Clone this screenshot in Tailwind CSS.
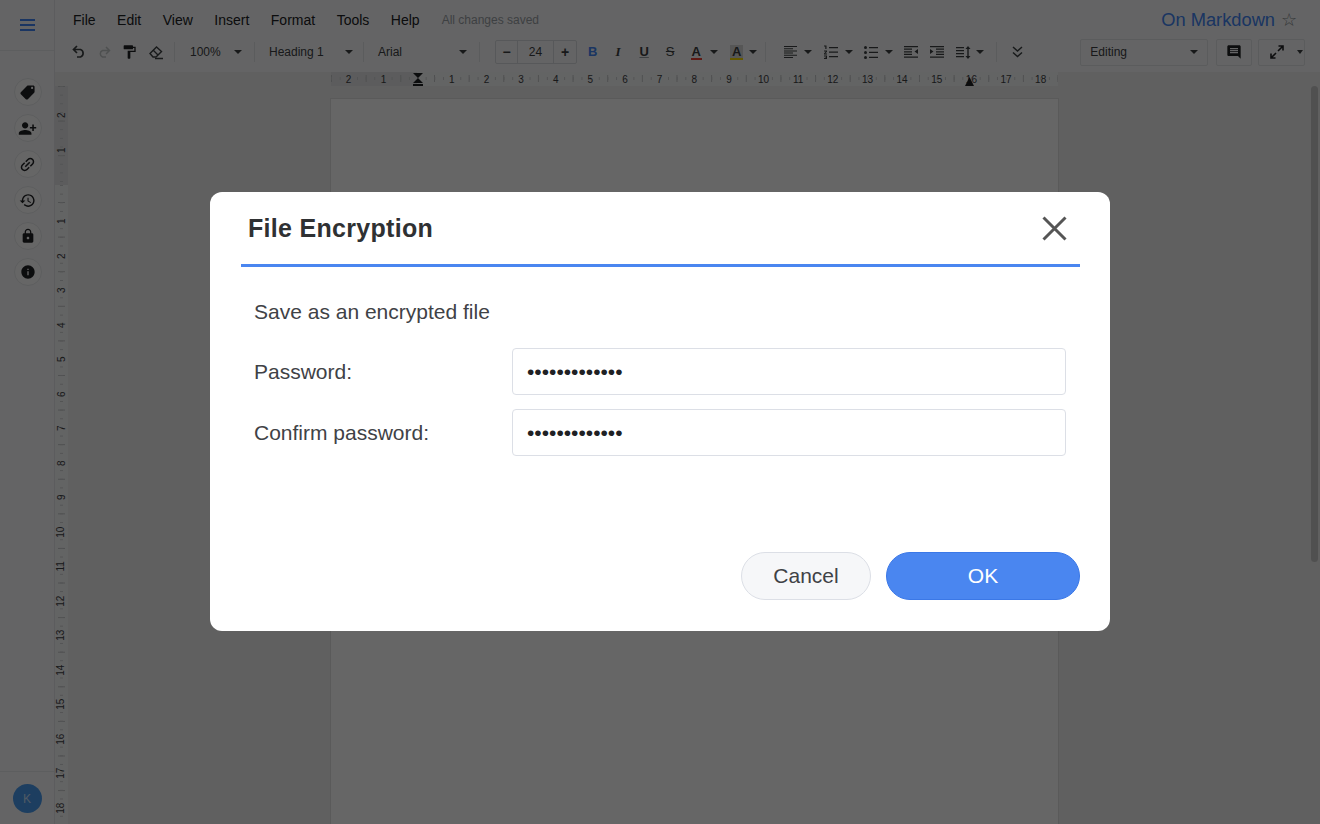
<!DOCTYPE html>
<html><head><meta charset="utf-8"><title>On Markdown</title>
<script src="https://cdn.jsdelivr.net/npm/@tailwindcss/browser@4"></script></head>
<body class="m-0 overflow-hidden font-['Liberation_Sans',Arial,sans-serif]">
<div class="relative w-[1320px] h-[824px] overflow-hidden bg-[#f0f0f0] flex text-[#3c4043]">
  <!-- left rail -->
  <aside class="w-[55px] shrink-0 bg-[#fafbfc] border-r border-[#e5e7ea] flex flex-col items-center">
    <div class="h-[51px] w-full flex items-center justify-center border-b border-[#e8eaed] pl-[2px]">
      <svg width="16" height="12" viewBox="0 0 16 12" fill="#4285f4"><rect width="15" height="2" y="0"/><rect width="15" height="2" y="5"/><rect width="15" height="2" y="10"/></svg>
    </div>
    <div class="flex flex-col gap-2 mt-[27px] ml-[1px]">
      <div class="w-7 h-7 rounded-full bg-white border border-[#e8eaed] flex items-center justify-center"><svg width="17" height="17" viewBox="0 0 24 24" fill="#202124" class="rotate-90"><path d="M21.41 11.58l-9-9C12.05 2.22 11.55 2 11 2H4c-1.1 0-2 .9-2 2v7c0 .55.22 1.05.59 1.42l9 9c.36.36.86.58 1.41.58.55 0 1.05-.22 1.41-.59l7-7c.37-.36.59-.86.59-1.41 0-.55-.23-1.06-.59-1.42zM5.5 7C4.67 7 4 6.33 4 5.5S4.67 4 5.5 4 7 4.67 7 5.5 6.33 7 5.5 7z"/></svg></div>
      <div class="w-7 h-7 rounded-full bg-white border border-[#e8eaed] flex items-center justify-center"><svg width="19" height="19" viewBox="0 0 24 24" fill="#202124" class="-scale-x-100"><path d="M15 12c2.21 0 4-1.79 4-4s-1.79-4-4-4-4 1.79-4 4 1.79 4 4 4zm-9-2V7H4v3H1v2h3v3h2v-3h3v-2H6zm9 4c-2.67 0-8 1.34-8 4v2h16v-2c0-2.66-5.33-4-8-4z"/></svg></div>
      <div class="w-7 h-7 rounded-full bg-white border border-[#e8eaed] flex items-center justify-center"><svg width="19" height="19" viewBox="0 0 24 24" fill="#202124" class="-rotate-45"><path d="M3.9 12c0-1.71 1.39-3.1 3.1-3.1h4V7H7c-2.76 0-5 2.24-5 5s2.24 5 5 5h4v-1.9H7c-1.71 0-3.1-1.39-3.1-3.1zM8 13h8v-2H8v2zm9-6h-4v1.9h4c1.71 0 3.1 1.39 3.1 3.1s-1.39 3.1-3.1 3.1h-4V17h4c2.76 0 5-2.24 5-5s-2.24-5-5-5z"/></svg></div>
      <div class="w-7 h-7 rounded-full bg-white border border-[#e8eaed] flex items-center justify-center"><svg width="17" height="17" viewBox="0 0 24 24" fill="#202124"><path d="M13 3c-4.97 0-9 4.03-9 9H1l3.89 3.89.07.14L9 12H6c0-3.87 3.13-7 7-7s7 3.13 7 7-3.13 7-7 7c-1.93 0-3.68-.79-4.94-2.06l-1.42 1.42C8.27 19.99 10.51 21 13 21c4.97 0 9-4.03 9-9s-4.03-9-9-9zm-1 5v5l4.28 2.54.72-1.21-3.5-2.08V8H12z"/></svg></div>
      <div class="w-7 h-7 rounded-full bg-white border border-[#e8eaed] flex items-center justify-center"><svg width="16" height="16" viewBox="0 0 24 24" fill="#202124"><path d="M18 8h-1V6c0-2.76-2.24-5-5-5S7 3.24 7 6v2H6c-1.1 0-2 .9-2 2v10c0 1.1.9 2 2 2h12c1.1 0 2-.9 2-2V10c0-1.1-.9-2-2-2zm-6 9c-1.1 0-2-.9-2-2s.9-2 2-2 2 .9 2 2-.9 2-2 2zm3.1-9H8.9V6c0-1.71 1.39-3.1 3.1-3.1 1.71 0 3.1 1.39 3.1 3.1v2z"/></svg></div>
      <div class="w-7 h-7 rounded-full bg-white border border-[#e8eaed] flex items-center justify-center"><svg width="16" height="16" viewBox="0 0 24 24" fill="#202124"><path d="M12 2C6.48 2 2 6.48 2 12s4.48 10 10 10 10-4.48 10-10S17.52 2 12 2zm1 15h-2v-6h2v6zm0-8h-2V7h2v2z"/></svg></div>
    </div>
    <div class="mt-auto w-full border-t border-[#e8eaed] pt-[12px] pb-[11px] flex justify-center">
      <div class="w-[29px] h-[29px] rounded-full bg-[#4a9bf0] text-white/70 text-xs flex items-center justify-center">K</div>
    </div>
  </aside>
  <!-- main -->
  <div class="flex-1 min-w-0 flex flex-col">
    <header class="h-[72px] bg-[#fafbfc] shrink-0 flex flex-col">
      <div class="h-9 pt-[4px] flex items-center pl-[18px] pr-[23px] text-sm text-[#202124]">
        <nav class="flex gap-[21.5px]"><span>File</span><span>Edit</span><span>View</span><span>Insert</span><span>Format</span><span>Tools</span><span>Help</span></nav>
        <span class="ml-[22px] text-xs text-[#9aa0a6]">All changes saved</span>
        <span class="ml-auto text-[18.3px] text-[#4285f4]">On Markdown</span>
        <span class="ml-[6px] text-lg leading-none text-[#80868b]">☆</span>
      </div>
      <div class="h-8 flex items-center pl-[16px] text-xs text-[#3c4043]">
        <svg width="16" height="16" viewBox="0 0 16 16" fill="none" stroke="#3c4043" stroke-width="1.7"><path d="M6 2 2.5 5.5 6 9M3 5.5h6.5a4 4 0 0 1 0 7.5H6"/></svg>
        <svg class="ml-[9px]" width="16" height="16" viewBox="0 0 16 16" fill="none" stroke="#c4c7c9" stroke-width="1.5"><path d="M10 3l3.500 3.500L10 10M13 6.500H6.500a3.500 3.500 0 0 0 0 6.500H10"/></svg>
        <svg class="ml-[9px]" width="16" height="16" viewBox="0 0 24 24" fill="#202124"><path d="M18 4V3c0-.55-.45-1-1-1H5c-.55 0-1 .45-1 1v4c0 .55.45 1 1 1h12c.55 0 1-.45 1-1V6h2v4H10v11c0 .55.45 1 1 1h2c.55 0 1-.45 1-1v-9h8V4h-4z"/></svg>
        <svg class="ml-[11px]" width="16" height="16" viewBox="0 0 16 16" fill="none" stroke="#3c4043" stroke-width="1.4"><path d="M2 9.500 8.500 3l5 4.500L8 13H5z"/><path d="M5 6l5 5M7 14.500h8" /></svg>
        <i class="w-px h-5 bg-[#e3e5e8] ml-[10px]"></i>
        <span class="ml-[15px] w-[30px]">100%</span>
        <i class="ml-[14px] w-0 h-0 border-x-[4px] border-x-transparent border-t-[4px] border-t-[#3c4043]"></i>
        <i class="w-px h-5 bg-[#e3e5e8] ml-[12px]"></i>
        <span class="ml-[14px] w-[55px]">Heading 1</span>
        <i class="ml-[21px] w-0 h-0 border-x-[4px] border-x-transparent border-t-[4px] border-t-[#3c4043]"></i>
        <i class="w-px h-5 bg-[#e3e5e8] ml-[10px]"></i>
        <span class="ml-[14px] w-[25px]">Arial</span>
        <i class="ml-[56px] w-0 h-0 border-x-[4px] border-x-transparent border-t-[4px] border-t-[#3c4043]"></i>
        <i class="w-px h-5 bg-[#e3e5e8] ml-[12px]"></i>
        <div class="ml-[15px] w-[82px] h-[24px] border border-[#dadce0] rounded-[2px] flex items-center">
          <span class="w-[22px] h-full flex items-center justify-center border-r border-[#dadce0] text-sm font-bold">−</span>
          <span class="flex-1 text-center">24</span>
          <span class="w-[23px] h-full flex items-center justify-center border-l border-[#dadce0] text-sm font-bold">+</span>
        </div>
        <span class="ml-[11px] text-[13px] font-bold text-[#4285f4]">B</span>
        <span class="ml-[18px] text-[13px] italic font-bold font-['Liberation_Serif',serif]">I</span>
        <span class="ml-[19px] text-[13px] font-bold underline decoration-[#9aa0a6]">U</span>
        <span class="ml-[17px] text-[13px] line-through">S</span>
        <span class="ml-[16px] text-[13px] font-bold border-b-2 border-[#ea4335] leading-[13px] px-[1px]">A</span>
        <i class="ml-[8px] w-0 h-0 border-x-[4px] border-x-transparent border-t-[4px] border-t-[#3c4043]"></i>
        <span class="ml-[12px] text-[13px] font-bold border-b-2 border-[#fbdc04] bg-[#d8d8d8] leading-[13px] px-[2px]">A</span>
        <i class="ml-[6px] w-0 h-0 border-x-[4px] border-x-transparent border-t-[4px] border-t-[#3c4043]"></i>
        <i class="w-px h-5 bg-[#e3e5e8] ml-[8px]"></i>
        <svg class="ml-[18px]" width="14" height="12" viewBox="0 0 14 12" fill="#3c4043"><path d="M0 0h13v1H0zM0 2.200h9v1H0zM0 4.400h13v1H0zM0 6.600h9v1H0zM0 8.800h13v1H0zM0 11h9v1H0z"/></svg>
        <i class="ml-[6px] w-0 h-0 border-x-[4px] border-x-transparent border-t-[4px] border-t-[#3c4043]"></i>
        <svg class="ml-[12px]" width="14" height="14" viewBox="0 0 14 14" fill="#3c4043"><path d="M5 2h9v1.300H5zM5 6.500h9v1.300H5zM5 11h9v1.300H5zM0 .5h2.500v3.500H1.300V1.500H0zM0 5.500h3v1.200L1.200 8.500H3v1H0v-1l1.800-2H0zM0 10.500h3v3.500H0v-1h2v-.5H.8v-.6H2v-.4H0z"/></svg>
        <i class="ml-[7px] w-0 h-0 border-x-[4px] border-x-transparent border-t-[4px] border-t-[#3c4043]"></i>
        <svg class="ml-[11px]" width="14" height="13" viewBox="0 0 14 13" fill="#3c4043"><circle cx="1.500" cy="1.500" r="1.500"/><circle cx="1.500" cy="6.500" r="1.500"/><circle cx="1.500" cy="11.500" r="1.500"/><path d="M5 1h9v1.300H5zM5 5.800h9v1.300H5zM5 10.800h9v1.300H5z"/></svg>
        <i class="ml-[7px] w-0 h-0 border-x-[4px] border-x-transparent border-t-[4px] border-t-[#3c4043]"></i>
        <svg class="ml-[11px]" width="14" height="12" viewBox="0 0 14 12" fill="#3c4043"><path d="M0 0h14v1.200H0zM0 2.600h8v1.200H0zM0 5.200h8v1.200H0zM0 7.800h8v1.200H0zM0 10.500h14v1.200H0zM14 3v5l-3.500-2.500z"/></svg>
        <svg class="ml-[12px]" width="14" height="12" viewBox="0 0 14 12" fill="#3c4043"><path d="M0 0h14v1.200H0zM6 2.600h8v1.200H6zM6 5.200h8v1.200H6zM6 7.800h8v1.200H6zM0 10.500h14v1.200H0zM0 3v5l3.500-2.500z"/></svg>
        <svg class="ml-[12px]" width="15" height="13" viewBox="0 0 15 13" fill="#3c4043"><path d="M0 1h8v1.200H0zM0 4h8v1.200H0zM0 7h8v1.200H0zM0 10h8v1.200H0zM12 0l2.500 3h-1.800v7h1.800L12 13l-2.500-3h1.800V3H9.500z"/></svg>
        <i class="ml-[5px] w-0 h-0 border-x-[4px] border-x-transparent border-t-[4px] border-t-[#3c4043]"></i>
        <i class="w-px h-5 bg-[#e3e5e8] ml-[12px]"></i>
        <svg class="ml-[15px]" width="11" height="12" viewBox="0 0 11 12" fill="none" stroke="#3c4043" stroke-width="1.500"><path d="M1 1l4.500 4L10 1M1 6.500l4.500 4 4.500-4"/></svg>
        <div class="ml-[57px] w-[128px] h-[27px] border border-[#e3e5e8] rounded-[2px] flex items-center justify-between px-[9px]"><span class="text-xs">Editing</span><i class="w-0 h-0 border-x-[4px] border-x-transparent border-t-[4px] border-t-[#3c4043]"></i></div>
        <div class="ml-[8px] w-[36px] h-[27px] border border-[#e3e5e8] rounded-[2px] flex items-center justify-center"><svg width="16" height="16" viewBox="0 0 24 24" fill="#202124"><path d="M21.990 4c0-1.100-.890-2-1.990-2H4c-1.100 0-2 .900-2 2v12c0 1.100.900 2 2 2h14l4 4-.010-18zM18 14H6v-2h12v2zm0-3H6V9h12v2zm0-3H6V6h12v2z"/></svg></div>
        <div class="ml-[6px] w-[47px] h-[27px] border border-[#e3e5e8] rounded-[2px] flex items-center pl-[11px] gap-[13px]"><svg width="14" height="14" viewBox="0 0 14 14" fill="none" stroke="#202124" stroke-width="1.600"><path d="M8 6l4.500-4.500M8.500 1h4.500v4.500M6 8l-4.500 4.500M1 8.500V13h4.500"/></svg><i class="w-0 h-0 border-x-[3.500px] border-x-transparent border-t-[4px] border-t-[#3c4043]"></i></div>
      </div>
    </header>
    <!-- horizontal ruler -->
    <div class="h-[14px] shrink-0 flex text-[10px] leading-[15px] text-[#3c4043] bg-[#f0f0f0] relative">
      <div class="ml-[276px] w-[87px] flex bg-[#e6e7e8] bg-[linear-gradient(90deg,#cfd1d3_1px,transparent_1px),linear-gradient(90deg,#c6c8ca_1px,transparent_1px)] bg-[length:8.66px_3px,34.65px_7px] bg-[position:0_5px,0_3px] bg-repeat-x"><span class="w-[35px] text-center">2</span><span class="w-[35px] text-center">1</span></div>
      <div class="flex flex-1 mr-[262px] pl-[17px] bg-[#f8f9fa] bg-[linear-gradient(90deg,#cfd1d3_1px,transparent_1px),linear-gradient(90deg,#c6c8ca_1px,transparent_1px)] bg-[length:8.66px_3px,34.65px_7px] bg-[position:0_5px,17px_3px] bg-repeat-x">
        <span class="w-[34.65px] text-center shrink-0">1</span><span class="w-[34.65px] text-center shrink-0">2</span><span class="w-[34.65px] text-center shrink-0">3</span><span class="w-[34.65px] text-center shrink-0">4</span><span class="w-[34.65px] text-center shrink-0">5</span><span class="w-[34.65px] text-center shrink-0">6</span><span class="w-[34.65px] text-center shrink-0">7</span><span class="w-[34.65px] text-center shrink-0">8</span><span class="w-[34.65px] text-center shrink-0">9</span><span class="w-[34.65px] text-center shrink-0">10</span><span class="w-[34.65px] text-center shrink-0">11</span><span class="w-[34.65px] text-center shrink-0">12</span><span class="w-[34.65px] text-center shrink-0">13</span><span class="w-[34.65px] text-center shrink-0">14</span><span class="w-[34.65px] text-center shrink-0">15</span><span class="w-[34.65px] text-center shrink-0">16</span><span class="w-[34.65px] text-center shrink-0">17</span><span class="w-[34.65px] text-center shrink-0">18</span>
      </div>
      <svg class="absolute left-[358px] top-0" width="10" height="14" viewBox="0 0 10 14" fill="#202124"><path d="M0 1h10L5 6l5 5H0l5-5zM0 12h10v2H0z"/></svg>
      <svg class="absolute left-[910px] top-[5px]" width="9" height="9" viewBox="0 0 9 9" fill="#202124"><path d="M0 9 4.500 0 9 9z"/></svg>
    </div>
    <div class="flex-1 min-h-0 flex">
      <!-- vertical ruler -->
      <div class="w-[13px] shrink-0 bg-[#f8f9fa] flex flex-col items-center text-[10px] text-[#3c4043]">
        <div class="h-[99px] w-full bg-[#e6e7e8] shrink-0 flex flex-col items-center pt-[12px] bg-[linear-gradient(180deg,#cfd1d3_1px,transparent_1px),linear-gradient(180deg,#c6c8ca_1px,transparent_1px)] bg-[length:3px_8.65px,7px_34.6px] bg-[position:5px_0,3px_0] bg-repeat-y"><span class="h-[34.5px] -rotate-90 leading-[34px]">2</span><span class="h-[34.5px] -rotate-90 leading-[34px]">1</span></div>
        <div class="w-full flex-1 flex flex-col items-center pt-[19px] bg-[linear-gradient(180deg,#cfd1d3_1px,transparent_1px),linear-gradient(180deg,#c6c8ca_1px,transparent_1px)] bg-[length:3px_8.65px,7px_34.6px] bg-[position:5px_0,3px_17px] bg-repeat-y">
          <span class="h-[34.5px] -rotate-90 leading-[34px] shrink-0">1</span><span class="h-[34.5px] -rotate-90 leading-[34px] shrink-0">2</span><span class="h-[34.5px] -rotate-90 leading-[34px] shrink-0">3</span><span class="h-[34.5px] -rotate-90 leading-[34px] shrink-0">4</span><span class="h-[34.5px] -rotate-90 leading-[34px] shrink-0">5</span><span class="h-[34.5px] -rotate-90 leading-[34px] shrink-0">6</span><span class="h-[34.5px] -rotate-90 leading-[34px] shrink-0">7</span><span class="h-[34.5px] -rotate-90 leading-[34px] shrink-0">8</span><span class="h-[34.5px] -rotate-90 leading-[34px] shrink-0">9</span><span class="h-[34.5px] -rotate-90 leading-[34px] shrink-0">10</span><span class="h-[34.5px] -rotate-90 leading-[34px] shrink-0">11</span><span class="h-[34.5px] -rotate-90 leading-[34px] shrink-0">12</span><span class="h-[34.5px] -rotate-90 leading-[34px] shrink-0">13</span><span class="h-[34.5px] -rotate-90 leading-[34px] shrink-0">14</span><span class="h-[34.5px] -rotate-90 leading-[34px] shrink-0">15</span><span class="h-[34.5px] -rotate-90 leading-[34px] shrink-0">16</span><span class="h-[34.5px] -rotate-90 leading-[34px] shrink-0">17</span><span class="h-[34.5px] -rotate-90 leading-[34px] shrink-0">18</span>
        </div>
      </div>
      <!-- canvas -->
      <div class="flex-1 pl-[262px] pt-[12px] flex justify-between items-start">
        <div class="w-[729px] h-[730px] bg-white border border-[#e0e0e0]"></div>
        <div class="w-[7px] h-[476px] mr-[2px] -mt-[12px] rounded bg-[#c8c8c8]"></div>
      </div>
    </div>
  </div>
  <!-- overlay -->
  <div class="absolute inset-0 bg-black/60 flex items-start justify-center pt-[192px]">
    <div class="w-[900px] h-[439px] bg-white rounded-xl pl-[31px] pr-[30px] text-[21px] text-[#3f4246] flex flex-col">
      <div class="h-[75px] border-b-[3px] border-[#4a86f0] flex items-center justify-between pl-[7px] pr-[13px]">
        <h2 class="text-[25px] font-bold text-[#2f3133] tracking-[0.3px] mt-[2px]">File Encryption</h2>
        <svg width="25" height="25" viewBox="0 0 25 25" stroke="#555" stroke-width="3" fill="none"><path d="M1.500 1.500l22 22M23.500 1.500l-22 22"/></svg>
      </div>
      <p class="mt-[31px] pl-[13px] leading-[28px]">Save as an encrypted file</p>
      <div class="mt-[22px] pl-[13px] flex items-center justify-between">
        <label>Password:</label>
        <input type="password" value="aaaaaaaaaaaaa" class="w-[554px] h-[47px] mr-[14px] px-[14px] border border-[#dcdfe6] rounded bg-white text-[21px] text-[#202124]">
      </div>
      <div class="mt-[14px] pl-[13px] flex items-center justify-between">
        <label>Confirm password:</label>
        <input type="password" value="aaaaaaaaaaaaa" class="w-[554px] h-[47px] mr-[14px] px-[14px] border border-[#dcdfe6] rounded bg-white text-[21px] text-[#202124]">
      </div>
      <div class="mt-[96px] flex justify-end gap-[15px]">
        <button class="w-[130px] h-[48px] rounded-full border border-[#dcdfe6] bg-[#f6f7f9] text-[#3f4246]">Cancel</button>
        <button class="w-[194px] h-[48px] rounded-full bg-[#4a86f0] border border-[#3b78e7] text-white">OK</button>
      </div>
    </div>
  </div>
</div>
</body></html>
